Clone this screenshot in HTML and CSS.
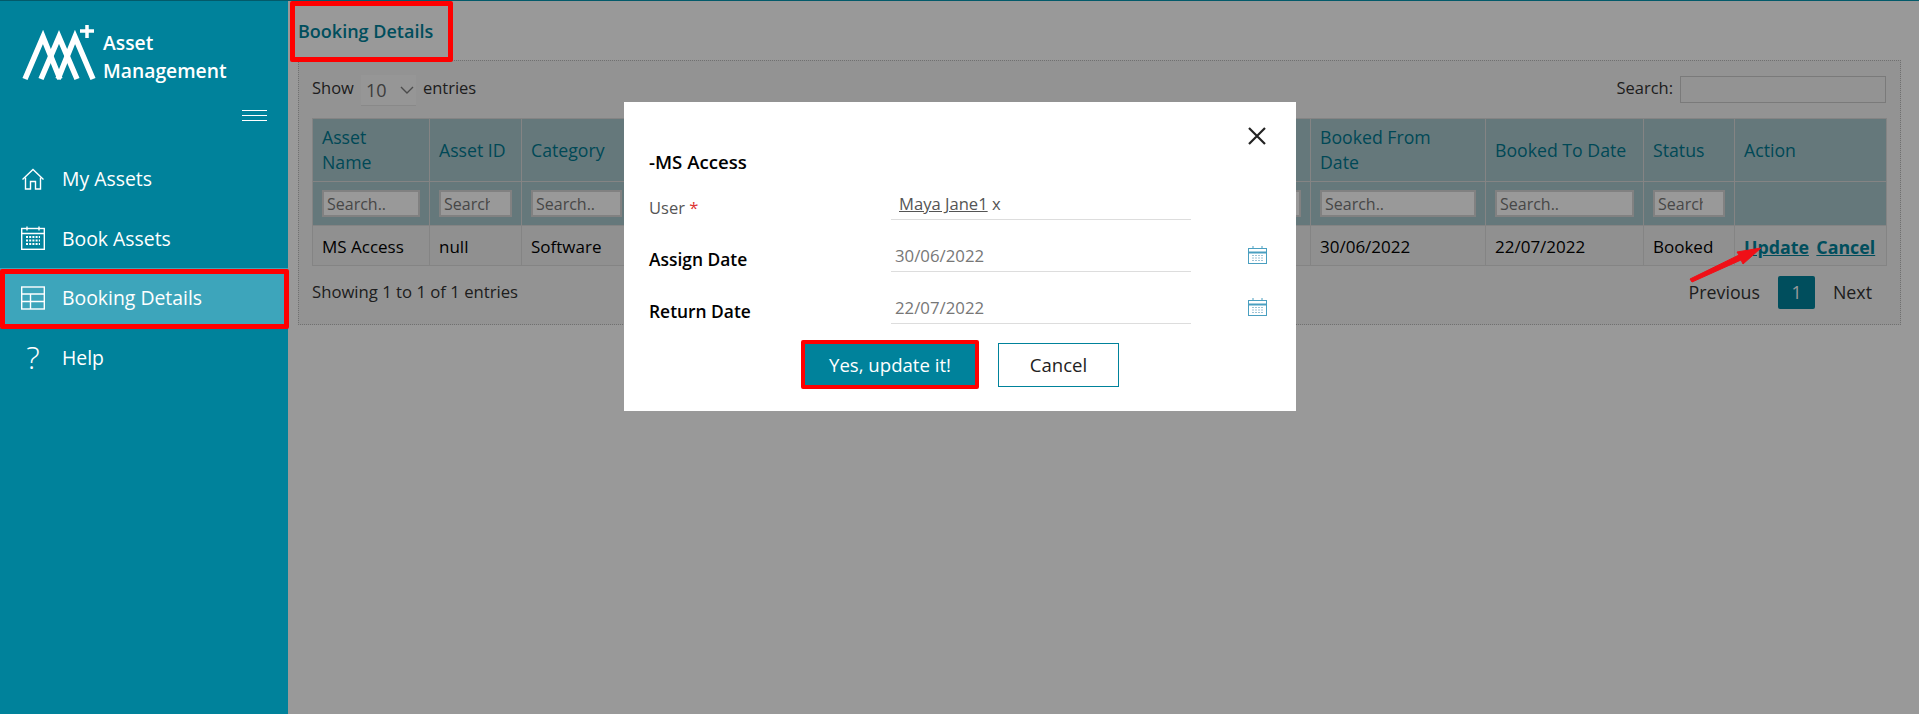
FILE: index.html
```html
<!DOCTYPE html>
<html>
<head>
<meta charset="UTF-8">
<title>Booking Details</title>
<link rel="stylesheet" href="styles.css">
</head>
<body>
<div class="app">
  <div class="sidebar">
    <div class="brand">
      <svg class="brand-mark" width="76" height="58" viewBox="0 0 76 58">
        <g fill="none" stroke="#fff" stroke-width="5.5">
          <path d="M3 54 L21 12 L38 54"/>
          <path d="M19 54 L37 12 L55 54"/>
          <path d="M36 54 L53 12 L71 54"/>
        </g>
        <path d="M58 6h14M65 0v13" fill="none" stroke="#fff" stroke-width="3.5"/>
      </svg>
      <div class="brand-name">Asset<br>Management</div>
    </div>
    <div class="burger"><span></span><span></span><span></span></div>
    <div class="nav">
      <div class="nav-item">
        <svg width="24" height="24" viewBox="0 0 24 24" fill="none" stroke="#fff" stroke-width="1.4"><path d="M1.5 12.5 L12 2.5 L22.5 12.5"/><path d="M4.5 10.5V22H9.5V14.5H14.5V22H19.5V10.5"/></svg>
        <span>My Assets</span>
      </div>
      <div class="nav-item">
        <svg width="24" height="24" viewBox="0 0 24 24" fill="none" stroke="#fff" stroke-width="1.4"><rect x="0.7" y="2.5" width="22.6" height="20.8"/><path d="M1 7.5H23M6 0.5V4.5M18 0.5V4.5"/><path d="M5 11h14M5 14.5h14M5 18h14" stroke-width="2" stroke-dasharray="2 1.2"/></svg>
        <span>Book Assets</span>
      </div>
      <div class="nav-item active">
        <svg width="24" height="24" viewBox="0 0 24 24" fill="none" stroke="#fff" stroke-width="1.4"><rect x="0.7" y="1" width="22.6" height="22"/><path d="M1 8H23M1 15.5H23M9.5 8V23"/></svg>
        <span>Booking Details</span>
      </div>
      <div class="nav-item">
        <span class="help-mark">?</span>
        <span>Help</span>
      </div>
    </div>
  </div>

  <div class="main">
    <div class="page-title">Booking Details</div>
    <div class="panel">
      <div class="tools">
        <div class="length">Show <span class="select">10<svg width="14" height="8" viewBox="0 0 14 8" fill="none" stroke="#7d7d7d" stroke-width="1.4"><path d="M1 1 L7 7 L13 1"/></svg></span> entries</div>
        <div class="search">Search: <span class="search-box"></span></div>
      </div>
      <table class="grid">
        <colgroup>
          <col class="c1"><col class="c2"><col class="c3"><col class="c4"><col class="c5"><col class="c6"><col class="c7"><col class="c8"><col class="c9">
        </colgroup>
        <tr class="head">
          <th>Asset<br>Name</th><th>Asset ID</th><th>Category</th><th></th><th></th><th>Booked From<br>Date</th><th>Booked To Date</th><th>Status</th><th>Action</th>
        </tr>
        <tr class="filter">
          <td><input placeholder="Search.."></td>
          <td><input placeholder="Search.."></td>
          <td><input placeholder="Search.."></td>
          <td></td>
          <td><input placeholder="Search.."></td>
          <td><input placeholder="Search.."></td>
          <td><input placeholder="Search.."></td>
          <td><input placeholder="Search.."></td>
          <td></td>
        </tr>
        <tr class="row">
          <td>MS Access</td><td>null</td><td>Software</td><td></td><td></td><td>30/06/2022</td><td>22/07/2022</td><td>Booked</td>
          <td class="acts"><a href="#" class="act">Update</a> <a href="#" class="act">Cancel</a></td>
        </tr>
      </table>
      <div class="foot">
        <div>Showing 1 to 1 of 1 entries</div>
        <div class="pager"><span>Previous</span><span class="page-on">1</span><span>Next</span></div>
      </div>
    </div>

    <div class="shade"></div>

    <div class="modal">
      <svg class="close" width="18" height="18" viewBox="0 0 18 18" fill="none" stroke="#222" stroke-width="2.2"><path d="M1 1 L17 17M17 1 L1 17"/></svg>
      <div class="modal-title">-MS Access</div>
      <div class="form">
        <div class="lbl">User <span class="req">*</span></div>
        <div class="val user"><a href="#">Maya Jane1</a> x</div>
        <div></div>
        <div class="lbl strong">Assign Date</div>
        <div class="val">30/06/2022</div>
        <svg class="cal" width="19" height="18" viewBox="0 0 19 18" fill="none" stroke="#4a9fc0"><rect x="0.5" y="2.5" width="18" height="15"/><path d="M0.5 6.5H18.5" stroke-width="2"/><path d="M5 0v3M14 0v3"/><path d="M4 9.5h11M4 12h11M4 14.5h11" stroke="#9cc3d6" stroke-dasharray="2 1"/></svg>
        <div class="lbl strong">Return Date</div>
        <div class="val">22/07/2022</div>
        <svg class="cal" width="19" height="18" viewBox="0 0 19 18" fill="none" stroke="#4a9fc0"><rect x="0.5" y="2.5" width="18" height="15"/><path d="M0.5 6.5H18.5" stroke-width="2"/><path d="M5 0v3M14 0v3"/><path d="M4 9.5h11M4 12h11M4 14.5h11" stroke="#9cc3d6" stroke-dasharray="2 1"/></svg>
      </div>
      <div class="modal-btns">
        <span class="btn btn-yes">Yes, update it!</span>
        <span class="btn btn-no">Cancel</span>
      </div>
    </div>
  </div>
</div>

<div class="mark mark-title"></div>
<div class="mark mark-nav"></div>
<svg class="arrow" width="80" height="42" viewBox="0 0 80 42"><path d="M2 35 L51 11 L49 8 L73 4 L55 20 L53 16 L4 38 Z" fill="#f00f17" stroke="#f00f17" stroke-linejoin="round"/></svg>
</body>
</html>
```

FILE: styles.css
```css
html, body {
  margin: 0;
  height: 100%;
  overflow: hidden;
}
body {
  font-family: "Open Sans", "Noto Sans", sans-serif;
  font-size: 16.5px;
  color: #333;
  background: #fff;
}
a { color: inherit; }

.app {
  display: flex;
  height: 714px;
  position: relative;
  border-top: 1px solid #035a6a;
  box-sizing: border-box;
}

/* sidebar */
.sidebar {
  width: 288px;
  flex: none;
  background: #00829b;
  color: #fff;
}
.brand {
  display: flex;
  gap: 5px;
  padding: 24px 0 0 22px;
  height: 63px;
}
.brand-mark { flex: none; }
.brand-name {
  font-size: 19.3px;
  font-weight: 600;
  line-height: 28px;
  padding-top: 4px;
}
.burger {
  margin: 22px 0 0 242px;
  width: 25px;
  display: flex;
  flex-direction: column;
  gap: 4px;
}
.burger span {
  height: 1px;
  background: #fff;
}
.nav {
  margin-top: 28px;
}
.nav-item {
  display: flex;
  align-items: center;
  gap: 17px;
  height: 59.5px;
  padding-left: 21px;
  font-size: 19.4px;
}
.nav-item.active { background: #3da5bb; }
.help-mark {
  width: 24px;
  text-align: center;
  font-size: 32px;
  font-weight: 300;
  line-height: 1;
}

/* main */
.main {
  flex: 1;
  position: relative;
  padding: 0 18px 0 10px;
  min-width: 0;
}
.page-title {
  height: 59px;
  line-height: 61px;
  font-size: 18px;
  font-weight: 600;
  color: #00829b;
}
.panel {
  border: 1px dotted #bbb;
  background: #f6f6f6;
  padding: 14px 14px 0 13px;
  height: 265px;
  box-sizing: border-box;
}
.tools {
  display: flex;
  justify-content: space-between;
  align-items: flex-start;
  height: 43px;
}
.length {
  display: flex;
  align-items: flex-start;
  gap: 7px;
  line-height: 26px;
}
.select {
  display: flex;
  align-items: center;
  justify-content: space-between;
  width: 55px;
  height: 31px;
  padding: 0 2px 0 5px;
  box-sizing: border-box;
  background: #fafafa;
  border-bottom: 1px solid #e4e4e4;
  color: #666;
  font-size: 18px;
}
.search {
  display: flex;
  align-items: flex-start;
  gap: 7px;
  line-height: 26px;
}
.search-box {
  width: 206px;
  height: 27px;
  margin-top: 1px;
  box-sizing: border-box;
  border: 1px solid #ccc;
  background: #f6f6f6;
}

.grid {
  width: 1574px;
  table-layout: fixed;
  border-collapse: collapse;
  font-size: 17px;
}
.c1 { width: 117px; }
.c2 { width: 92px; }
.c3 { width: 110px; }
.c4 { width: 493px; }
.c5 { width: 186px; }
.c6 { width: 175px; }
.c7 { width: 158px; }
.c8 { width: 91px; }
.c9 { width: 152px; }
.grid th, .grid td {
  border: 1px solid #ddd;
  padding: 0 9.5px 0 9px;
  text-align: left;
}
.grid th {
  font-size: 17.7px;
  font-weight: 400;
  line-height: 25px;
  color: #007890;
}
.head th, .filter td { background: #a8c9ce; }
.head { height: 63px; }
.filter { height: 44px; }
.row { height: 40px; }
.grid .row td {
  background: #f0f0f0;
  color: #000;
  padding-top: 2px;
}
.filter input {
  display: block;
  width: 100%;
  height: 27px;
  box-sizing: border-box;
  border: 2px solid #d8d8d8;
  padding: 0 20px 0 3px;
  font: inherit;
  font-size: 16px;
  background: #fff;
}
.filter input::placeholder { color: #777; }
.acts { white-space: nowrap; }
.act {
  color: #00829b;
  font-size: 17.8px;
  font-weight: 700;
  margin-right: 3px;
}
.foot {
  display: flex;
  justify-content: space-between;
  align-items: center;
  height: 50px;
  font-size: 16.7px;
}
.pager {
  display: flex;
  align-items: center;
  gap: 18px;
  padding: 2px 14px 0 0;
  font-size: 17.8px;
}
.page-on {
  width: 37px;
  height: 33px;
  line-height: 33px;
  text-align: center;
  border-radius: 2px;
  background: #00829b;
  color: #fff;
}

/* modal layer */
.shade {
  position: absolute;
  inset: 0;
  background: rgba(0, 0, 0, .4);
}
.modal {
  position: absolute;
  left: 336px;
  top: 101px;
  width: 672px;
  height: 309px;
  box-sizing: border-box;
  padding: 47px 25px 0;
  background: #fff;
  color: #000;
}
.close {
  position: absolute;
  right: 30px;
  top: 25px;
}
.modal-title {
  font-size: 18.6px;
  font-weight: 600;
  height: 30px;
  line-height: 26px;
}
.form {
  display: grid;
  grid-template-columns: 242px 300px 76px;
  grid-auto-rows: 52px;
  align-items: center;
}
.lbl { color: #555; font-size: 16.5px; padding-top: 4px; }
.lbl.strong {
  color: #000;
  font-weight: 600;
  font-size: 17.4px;
  padding-top: 3px;
}
.req { color: #d33; }
.val {
  align-self: end;
  height: 31px;
  margin-bottom: 11px;
  line-height: 30px;
  box-sizing: border-box;
  padding-left: 4px;
  border-bottom: 1px solid #ddd;
  color: #777;
  font-size: 16.8px;
}
.val.user { color: #555; padding-left: 8px; font-size: 16.6px; }
.cal { justify-self: end; margin-bottom: 4px; }
.modal-btns {
  display: flex;
  justify-content: center;
  align-items: center;
  gap: 19px;
  margin-top: 5px;
}
.btn {
  display: flex;
  align-items: center;
  justify-content: center;
  box-sizing: border-box;
  font-size: 18.6px;
}
.btn-yes {
  width: 178px;
  height: 49px;
  border: 4px solid #f00;
  border-radius: 2px;
  background: #00829b;
  color: #fff;
}
.btn-no {
  width: 121px;
  height: 44px;
  border: 1px solid #00829b;
  color: #222;
}

/* red review marks drawn over the shot */
.mark {
  position: absolute;
  box-sizing: border-box;
  border: 5px solid #f00;
  border-radius: 2px;
}
.mark-title {
  left: 290px;
  top: 1px;
  width: 163px;
  height: 61px;
}
.mark-nav {
  left: 0;
  top: 269px;
  width: 289px;
  height: 60px;
}
.arrow {
  position: absolute;
  left: 1688px;
  top: 244px;
}
```
